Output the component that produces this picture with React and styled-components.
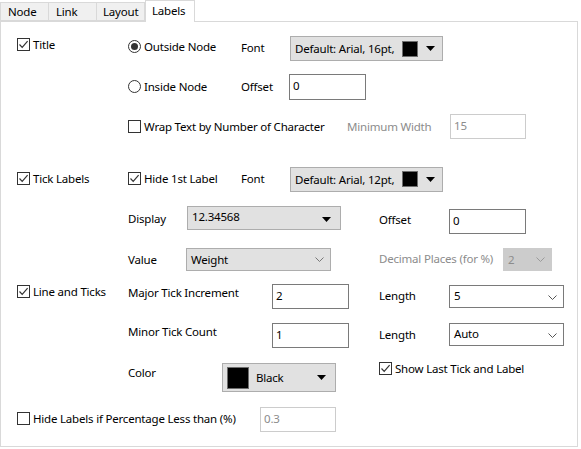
import React from "react";
import styled, { createGlobalStyle } from "styled-components";

const GlobalStyle = createGlobalStyle`
  html, body {
    margin: 0;
    padding: 0;
    background: #ffffff;
  }
  body {
    font-family: "Segoe UI", "Noto Sans", "Liberation Sans", sans-serif;
    font-size: 11.5px;
    letter-spacing: -0.2px;
    color: #000000;
  }
`;

const Window = styled.div`
  width: 581px;
  height: 449px;
  background: #ffffff;
  box-sizing: border-box;
`;

const TabBar = styled.div`
  display: flex;
  align-items: flex-end;
  height: 21px;
`;

const Tab = styled.div`
  box-sizing: border-box;
  width: ${(p) => p.$w}px;
  height: ${(p) => (p.$active ? 22 : 19)}px;
  padding-left: ${(p) => p.$pad}px;
  background: ${(p) => (p.$active ? "#ffffff" : "#f0f0f0")};
  border: 1px solid #d9d9d9;
  border-bottom: ${(p) => (p.$active ? "none" : "1px solid #d9d9d9")};
  border-left: ${(p) => (p.$first || p.$active ? "1px solid #d9d9d9" : "none")};
  line-height: ${(p) => (p.$active ? 19 : 17)}px;
  position: relative;
  z-index: ${(p) => (p.$active ? 2 : 1)};
  margin-bottom: ${(p) => (p.$active ? -1 : 0)}px;
  white-space: nowrap;
`;

const Panel = styled.div`
  box-sizing: border-box;
  width: 578px;
  height: 426px;
  border: 1px solid #d9d9d9;
  padding-left: 16px;
  padding-top: 14px;
  display: flex;
  flex-direction: column;
`;

const Row = styled.div`
  display: flex;
  align-items: center;
  height: ${(p) => p.$h}px;
  margin-top: ${(p) => p.$top || 0}px;
`;

const Cell = styled.div`
  flex: none;
  width: ${(p) => p.$w}px;
  display: flex;
  align-items: center;
  white-space: nowrap;
  margin-top: ${(p) => p.$shift || 0}px;
  color: ${(p) => (p.$disabled ? "#8c8c8c" : "#000000")};
`;

const Label = styled.span`
  line-height: 15px;
`;

const Box = styled.span`
  box-sizing: border-box;
  width: 13px;
  height: 13px;
  border: 1px solid #333333;
  background: #ffffff;
  margin-right: 3px;
  display: inline-flex;
  align-items: center;
  justify-content: center;
  flex: none;
`;

const RadioCircle = styled.span`
  box-sizing: border-box;
  width: 13px;
  height: 13px;
  border-radius: 50%;
  border: 1px solid #333333;
  background: #ffffff;
  margin-right: 3px;
  display: inline-flex;
  align-items: center;
  justify-content: center;
  flex: none;

  &::after {
    content: "";
    width: 7px;
    height: 7px;
    border-radius: 50%;
    background: ${(p) => (p.$on ? "#333333" : "transparent")};
  }
`;

const TextInput = styled.div`
  box-sizing: border-box;
  width: ${(p) => p.$w}px;
  height: ${(p) => p.$h || 25}px;
  border: 1px solid ${(p) => (p.$disabled ? "#cccccc" : "#7a7a7a")};
  background: #ffffff;
  color: ${(p) => (p.$disabled ? "#8c8c8c" : "#000000")};
  padding: 3px 0 0 3px;
  line-height: 15px;
  flex: none;
  margin-top: ${(p) => p.$shift || 0}px;
`;

const Combo = styled.div`
  box-sizing: border-box;
  width: ${(p) => p.$w}px;
  height: ${(p) => p.$h || 24}px;
  border: 1px solid ${(p) =>
    p.$disabled ? "#cccccc" : p.$white ? "#7a7a7a" : "#adadad"};
  background: ${(p) =>
    p.$disabled ? "#cccccc" : p.$white ? "#ffffff" : "#e1e1e1"};
  color: ${(p) => (p.$disabled ? "#8c8c8c" : "#000000")};
  display: flex;
  align-items: ${(p) => (p.$top ? "flex-start" : "center")};
  padding: ${(p) => (p.$top ? "2px 0 0 4px" : "0 0 0 4px")};
  flex: none;
  line-height: 15px;
  margin-top: ${(p) => p.$shift || 0}px;
`;

const ComboText = styled.span`
  flex: 1;
  white-space: nowrap;
`;

const Swatch = styled.span`
  box-sizing: border-box;
  width: ${(p) => p.$size}px;
  height: ${(p) => p.$size}px;
  background: #000000;
  border: 1px solid #6d6d6d;
  flex: none;
  margin-right: ${(p) => p.$gap || 0}px;
`;

const ArrowBox = styled.span`
  width: ${(p) => p.$w}px;
  display: flex;
  align-items: center;
  justify-content: center;
  flex: none;
  align-self: center;
`;

const Check = () => (
  <svg width="11" height="11" viewBox="0 0 11 11">
    <path d="M1.5 5.5 L4.2 8.3 L9.6 2.2" fill="none" stroke="#333333" strokeWidth="1.2" />
  </svg>
);

const CheckItem = ({ checked, children }) => (
  <>
    <Box>{checked && <Check />}</Box>
    <Label>{children}</Label>
  </>
);

const RadioItem = ({ on, children }) => (
  <>
    <RadioCircle $on={on} />
    <Label>{children}</Label>
  </>
);

const Triangle = () => (
  <svg width="9" height="5" viewBox="0 0 9 5">
    <path d="M0 0 H9 L4.5 5 Z" fill="#000000" />
  </svg>
);

const Chevron = ({ color = "#555555" }) => (
  <svg width="9" height="5" viewBox="0 0 9 5">
    <path d="M0.5 0.5 L4.5 4.5 L8.5 0.5" fill="none" stroke={color} strokeWidth="1" />
  </svg>
);

const FontCombo = ({ text }) => (
  <Combo $w={153} $h={25}>
    <ComboText>{text}</ComboText>
    <Swatch $size={16} />
    <ArrowBox $w={24}>
      <Triangle />
    </ArrowBox>
  </Combo>
);

const App = () => {
  return (
    <Window>
      <GlobalStyle />
      <TabBar>
        <Tab $w={49} $pad={7} $first>Node</Tab>
        <Tab $w={48} $pad={7}>Link</Tab>
        <Tab $w={48} $pad={6}>Layout</Tab>
        <Tab $w={50} $pad={6} $active>Labels</Tab>
      </TabBar>
      <Panel>
        <Row $h={25}>
          <Cell $w={111} $shift={-9}>
            <CheckItem checked>Title</CheckItem>
          </Cell>
          <Cell $w={113} $shift={-5}>
            <RadioItem on>Outside Node</RadioItem>
          </Cell>
          <Cell $w={49} $shift={-3}>
            <Label>Font</Label>
          </Cell>
          <FontCombo text="Default: Arial, 16pt," />
        </Row>

        <Row $h={26} $top={13}>
          <Cell $w={111} />
          <Cell $w={113} $shift={-2}>
            <RadioItem>Inside Node</RadioItem>
          </Cell>
          <Cell $w={48} $shift={-1}>
            <Label>Offset</Label>
          </Cell>
          <TextInput $w={77} $h={26}>0</TextInput>
        </Row>

        <Row $h={25} $top={14}>
          <Cell $w={111} />
          <Cell $w={219} $shift={-1}>
            <CheckItem>Wrap Text by Number of Character</CheckItem>
          </Cell>
          <Cell $w={103} $disabled>
            <Label>Minimum Width</Label>
          </Cell>
          <TextInput $w={76} $disabled>15</TextInput>
        </Row>

        <Row $h={24} $top={28}>
          <Cell $w={111} $shift={-2}>
            <CheckItem checked>Tick Labels</CheckItem>
          </Cell>
          <Cell $w={113} $shift={-2}>
            <CheckItem checked>Hide 1st Label</CheckItem>
          </Cell>
          <Cell $w={49} $shift={-2}>
            <Label>Font</Label>
          </Cell>
          <FontCombo text="Default: Arial, 12pt," />
        </Row>

        <Row $h={28} $top={15}>
          <Cell $w={111} />
          <Cell $w={59} $shift={-4}>
            <Label>Display</Label>
          </Cell>
          <Combo $w={154} $top $shift={-4}>
            <ComboText>12.34568</ComboText>
            <ArrowBox $w={28}>
              <Triangle />
            </ArrowBox>
          </Combo>
          <Cell $w={38} />
          <Cell $w={70} $shift={-2}>
            <Label>Offset</Label>
          </Cell>
          <TextInput $w={77} $shift={3}>0</TextInput>
        </Row>

        <Row $h={23} $top={14}>
          <Cell $w={111} />
          <Cell $w={58} $shift={-1}>
            <Label>Value</Label>
          </Cell>
          <Combo $w={145} $h={23}>
            <ComboText>Weight</ComboText>
            <ArrowBox $w={22}>
              <Chevron color="#777777" />
            </ArrowBox>
          </Combo>
          <Cell $w={48} />
          <Cell $w={124} $disabled $shift={-2}>
            <Label>Decimal Places (for %)</Label>
          </Cell>
          <Combo $w={49} $h={23} $disabled>
            <ComboText>2</ComboText>
            <ArrowBox $w={22}>
              <Chevron color="#9a9a9a" />
            </ArrowBox>
          </Combo>
        </Row>

        <Row $h={25} $top={13}>
          <Cell $w={111} $shift={-11}>
            <CheckItem checked>Line and Ticks</CheckItem>
          </Cell>
          <Cell $w={144} $shift={-8}>
            <Label>Major Tick Increment</Label>
          </Cell>
          <TextInput $w={77}>2</TextInput>
          <Cell $w={30} />
          <Cell $w={70} $shift={-3}>
            <Label>Length</Label>
          </Cell>
          <Combo $w={115} $h={23} $white $top $shift={-1}>
            <ComboText>5</ComboText>
            <ArrowBox $w={22}>
              <Chevron />
            </ArrowBox>
          </Combo>
        </Row>

        <Row $h={25} $top={14}>
          <Cell $w={111} />
          <Cell $w={144} $shift={-8}>
            <Label>Minor Tick Count</Label>
          </Cell>
          <TextInput $w={77}>1</TextInput>
          <Cell $w={30} />
          <Cell $w={70} $shift={-3}>
            <Label>Length</Label>
          </Cell>
          <Combo $w={115} $h={23} $white $top $shift={-2}>
            <ComboText>Auto</ComboText>
            <ArrowBox $w={22}>
              <Chevron />
            </ArrowBox>
          </Combo>
        </Row>

        <Row $h={29} $top={15}>
          <Cell $w={111} />
          <Cell $w={94} $shift={-10}>
            <Label>Color</Label>
          </Cell>
          <Combo $w={114} $h={29}>
            <Swatch $size={22} $gap={7} />
            <ComboText>Black</ComboText>
            <ArrowBox $w={28}>
              <Triangle />
            </ArrowBox>
          </Combo>
          <Cell $w={43} />
          <Cell $w={180} $shift={-18}>
            <CheckItem checked>Show Last Tick and Label</CheckItem>
          </Cell>
        </Row>

        <Row $h={25} $top={15}>
          <Cell $w={243} $shift={-3}>
            <CheckItem>Hide Labels if Percentage Less than (%)</CheckItem>
          </Cell>
          <TextInput $w={76} $disabled>0.3</TextInput>
        </Row>
      </Panel>
    </Window>
  );
};

export default App;
